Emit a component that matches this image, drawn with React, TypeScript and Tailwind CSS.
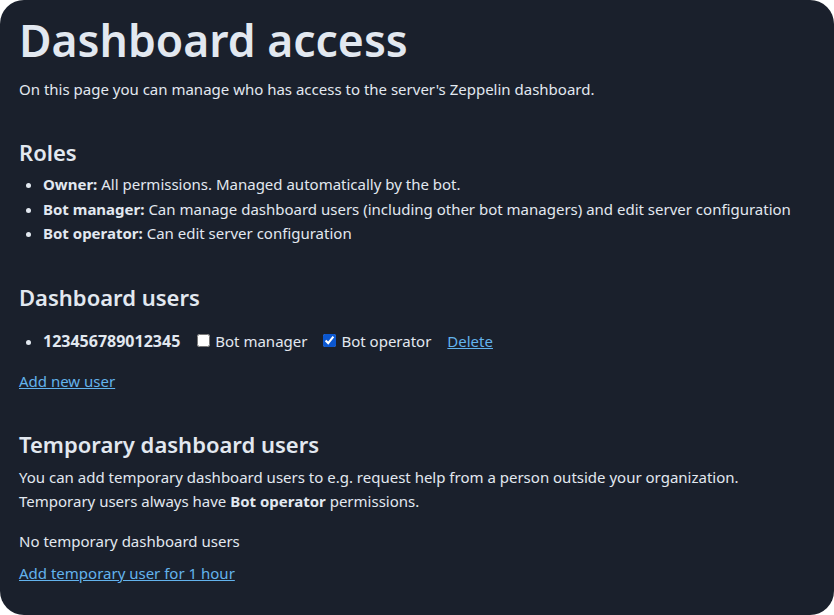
import React from 'react';

const roles = [
  { name: 'Owner:', text: 'All permissions. Managed automatically by the bot.' },
  { name: 'Bot manager:', text: 'Can manage dashboard users (including other bot managers) and edit server configuration' },
  { name: 'Bot operator:', text: 'Can edit server configuration' },
];

const App = () => {
  return (
    <div className="bg-white">
      <div
        className="h-[615px] w-[834px] rounded-3xl bg-[#1a202c] px-[19px] pt-[8px] text-[15px] leading-6 text-[#e2e8f0]"
        style={{ fontFamily: '"Noto Sans", "Open Sans", sans-serif' }}
      >
        <h1 className="text-[44.5px] leading-[64px] font-semibold">Dashboard access</h1>
        <p className="mt-[5px]">On this page you can manage who has access to the server's Zeppelin dashboard.</p>

        <h2 className="mt-[35px] text-[22px] leading-8 font-semibold">Roles</h2>
        <ul className="mt-[4px] list-disc pl-[24px]">
          {roles.map((r) => (
            <li key={r.name} className="leading-[24.5px]">
              <strong className="font-bold">{r.name}</strong> {r.text}
            </li>
          ))}
        </ul>

        <h2 className="mt-[35px] text-[22px] leading-8 font-semibold">Dashboard users</h2>
        <ul className="mt-[16px] list-disc pl-[24px]">
          <li>
            <div className="flex items-center">
              <strong className="text-[16px] font-bold">123456789012345</strong>
              <label className="ml-[17px] flex items-center gap-[5px]">
                <input type="checkbox" className="h-[13px] w-[13px]" />
                Bot manager
              </label>
              <label className="ml-[16px] flex items-center gap-[5px]">
                <input type="checkbox" defaultChecked className="h-[13px] w-[13px] accent-[#0b57d0]" />
                Bot operator
              </label>
              <a href="#" className="ml-[16px] text-[#63b3ed] underline">Delete</a>
            </div>
          </li>
        </ul>
        <a href="#" className="mt-[16px] inline-block text-[#63b3ed] underline">Add new user</a>

        <h2 className="mt-[35px] text-[22px] leading-8 font-semibold">Temporary dashboard users</h2>
        <p className="mt-[5px]">
          You can add temporary dashboard users to e.g. request help from a person outside your organization.
          <br />
          Temporary users always have <strong className="font-bold">Bot operator</strong> permissions.
        </p>
        <p className="mt-[16px]">No temporary dashboard users</p>
        <a href="#" className="mt-[8px] inline-block text-[#63b3ed] underline">Add temporary user for 1 hour</a>
      </div>
    </div>
  );
};

export default App;
